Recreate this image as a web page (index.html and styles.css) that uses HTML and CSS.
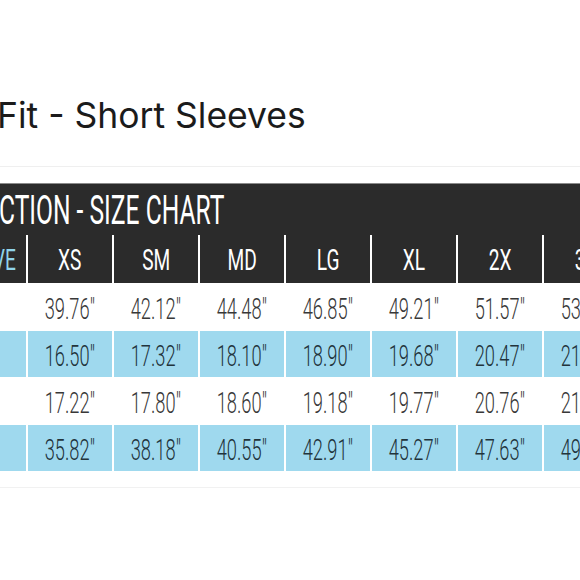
FILE: index.html
```html
<!DOCTYPE html>
<html lang="en">
<head>
<meta charset="utf-8">
<title>Size Chart</title>
<link rel="stylesheet" href="styles.css">
</head>
<body>
<div class="page">
  <header class="heading">
    <h1 class="heading-title">Fit - Short Sleeves</h1>
  </header>
  <section class="chart">
    <div class="chart-title"><span class="cond cond-title">CTION - SIZE CHART</span></div>
    <div class="grid">
      <div class="cell head head-label"><span class="cond cond-head">ACTIVE</span></div>
      <div class="cell head"><span class="cond cond-head">XS</span></div>
      <div class="cell head"><span class="cond cond-head">SM</span></div>
      <div class="cell head"><span class="cond cond-head">MD</span></div>
      <div class="cell head"><span class="cond cond-head">LG</span></div>
      <div class="cell head"><span class="cond cond-head">XL</span></div>
      <div class="cell head"><span class="cond cond-head">2X</span></div>
      <div class="cell head"><span class="cond cond-head">3X</span></div>

      <div class="cell"></div>
      <div class="cell"><span class="cond cond-val">39.76"</span></div>
      <div class="cell"><span class="cond cond-val">42.12"</span></div>
      <div class="cell"><span class="cond cond-val">44.48"</span></div>
      <div class="cell"><span class="cond cond-val">46.85"</span></div>
      <div class="cell"><span class="cond cond-val">49.21"</span></div>
      <div class="cell"><span class="cond cond-val">51.57"</span></div>
      <div class="cell"><span class="cond cond-val">53.93"</span></div>

      <div class="cell alt"></div>
      <div class="cell alt"><span class="cond cond-val">16.50"</span></div>
      <div class="cell alt"><span class="cond cond-val">17.32"</span></div>
      <div class="cell alt"><span class="cond cond-val">18.10"</span></div>
      <div class="cell alt"><span class="cond cond-val">18.90"</span></div>
      <div class="cell alt"><span class="cond cond-val">19.68"</span></div>
      <div class="cell alt"><span class="cond cond-val">20.47"</span></div>
      <div class="cell alt"><span class="cond cond-val">21.26"</span></div>

      <div class="cell"></div>
      <div class="cell"><span class="cond cond-val">17.22"</span></div>
      <div class="cell"><span class="cond cond-val">17.80"</span></div>
      <div class="cell"><span class="cond cond-val">18.60"</span></div>
      <div class="cell"><span class="cond cond-val">19.18"</span></div>
      <div class="cell"><span class="cond cond-val">19.77"</span></div>
      <div class="cell"><span class="cond cond-val">20.76"</span></div>
      <div class="cell"><span class="cond cond-val">21.35"</span></div>

      <div class="cell alt"></div>
      <div class="cell alt"><span class="cond cond-val">35.82"</span></div>
      <div class="cell alt"><span class="cond cond-val">38.18"</span></div>
      <div class="cell alt"><span class="cond cond-val">40.55"</span></div>
      <div class="cell alt"><span class="cond cond-val">42.91"</span></div>
      <div class="cell alt"><span class="cond cond-val">45.27"</span></div>
      <div class="cell alt"><span class="cond cond-val">47.63"</span></div>
      <div class="cell alt"><span class="cond cond-val">49.99"</span></div>
    </div>
  </section>
  <div class="footer-rule"></div>
</div>
</body>
</html>
```
FILE: styles.css
```css
html, body {
  margin: 0;
  padding: 0;
  background: #ffffff;
}

.page {
  width: 580px;
  height: 580px;
  overflow: hidden;
  background: #ffffff;
}

.heading {
  padding-top: 96px;
  padding-bottom: 30px;
  border-bottom: 1px solid #efefef;
}

.heading-title {
  margin: 0 0 0 -3px;
  font-family: Inter, "Noto Sans", sans-serif;
  font-weight: 400;
  font-size: 35.5px;
  line-height: 40px;
  color: #1b1b1b;
  white-space: nowrap;
}

.chart {
  margin-top: 16px;
}

.chart-title {
  height: 51px;
  background: #2b2b2b;
  border-top: 1px solid #8a8a8a;
  white-space: nowrap;
  overflow: hidden;
}

.cond {
  display: inline-block;
  font-family: Roboto, "Liberation Sans", sans-serif;
  white-space: nowrap;
}

.cond-title {
  font-size: 40px;
  line-height: 52px;
  font-weight: 400;
  color: #ffffff;
  transform: scaleX(0.615);
  transform-origin: left center;
  margin-left: -1px;
  margin-top: 1px;
}

.grid {
  margin-left: -58px;
  display: grid;
  grid-template-columns: repeat(8, 84px);
  grid-template-rows: 48px repeat(4, 46px);
  column-gap: 2px;
  row-gap: 1px;
}

.cell {
  display: flex;
  align-items: center;
  justify-content: center;
  background: #ffffff;
  color: #383838;
  overflow: visible;
}

.cell.alt {
  background: #9fd9ee;
  color: #22333b;
}

.cell.head {
  background: #2b2b2b;
  color: #ffffff;
}

.cell.head-label {
  color: #8fd4ea;
}

.cond-head {
  font-size: 29px;
  line-height: 1;
  transform: scaleX(0.66);
  margin-top: 2px;
}

.cond-val {
  font-size: 29px;
  line-height: 1;
  font-weight: 300;
  transform: scaleX(0.63);
  margin-top: 4px;
}

.footer-rule {
  margin-top: 16px;
  border-top: 1px solid #f1f1f1;
}
```
